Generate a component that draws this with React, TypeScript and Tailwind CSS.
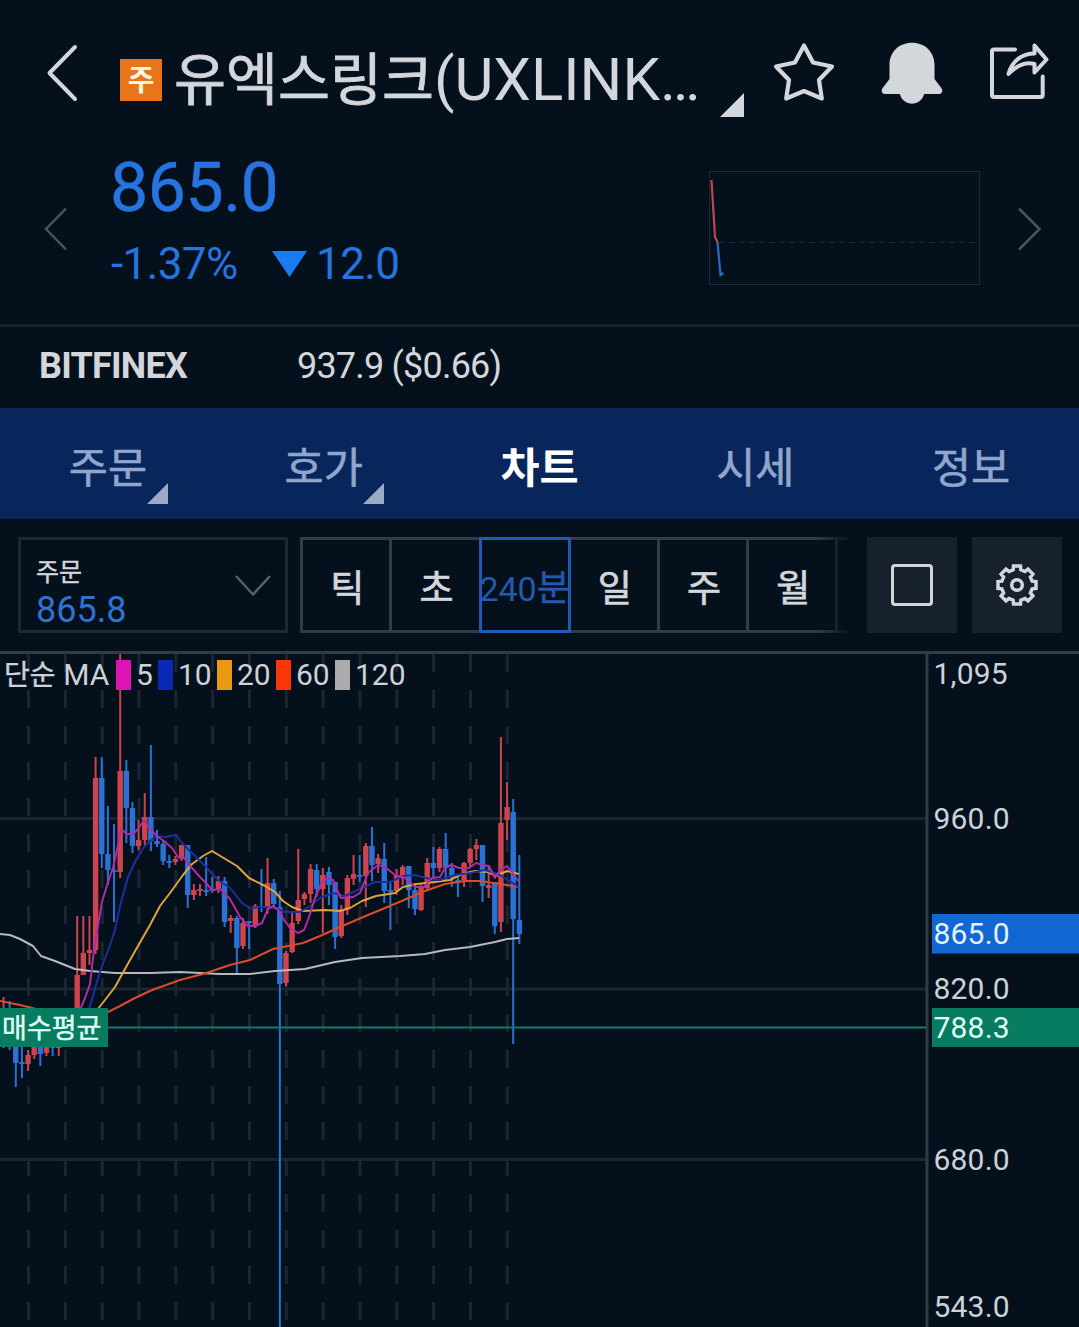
import React from 'react';

type Candle = [top: number, bottom: number, high: number, low: number, up: 0 | 1];

const TABS = [
  { id: 'order', label: '주문', more: true },
  { id: 'book', label: '호가', more: true },
  { id: 'chart', label: '차트', active: true },
  { id: 'quote', label: '시세' },
  { id: 'info', label: '정보' },
];

const PERIODS_LEFT = ['틱', '초'];
const PERIODS_RIGHT = ['일', '주', '월'];

const LEGEND = [
  { label: '5', color: 'bg-[#dc14b4]', width: 'w-[21px]' },
  { label: '10', color: 'bg-[#0a28b4]', width: 'w-[38px]' },
  { label: '20', color: 'bg-[#e89a12]', width: 'w-[38px]' },
  { label: '60', color: 'bg-[#fa3508]', width: 'w-[38px]' },
  { label: '120', color: 'bg-[#ababab]', width: 'w-[56px]' },
];

const TOP = 654;
const STEP = 6.141;
const FIRST_X = 3.5;

// body top, body bottom, high, low, up
const CANDLES: Candle[] = [
  [1010, 1030, 997, 1048, 1], [1015, 1040, 1001, 1050, 0], [1030, 1063, 1020, 1087, 0],
  [1062, 1064, 1040, 1078, 0], [1055, 1064, 1050, 1071, 1], [1040, 1055, 1035, 1059, 1],
  [1040, 1054, 1035, 1066, 0], [1042, 1053, 1035, 1056, 1], [1046, 1048, 1040, 1056, 0],
  [1040, 1048, 1035, 1056, 1], [1030, 1040, 1020, 1044, 1], [1010, 1030, 1010, 1040, 1],
  [975, 1012, 916, 1020, 1], [953, 975, 916, 975, 1], [950, 953, 916, 965, 1],
  [778, 950, 757, 954, 1], [778, 854, 757, 868, 0], [854, 870, 806, 885, 0],
  [870, 872, 824, 922, 0], [771, 872, 653, 878, 1], [771, 808, 760, 843, 0],
  [808, 846, 802, 853, 0], [840, 846, 820, 850, 1], [817, 840, 793, 845, 1],
  [817, 841, 745, 851, 0], [841, 844, 830, 847, 0], [844, 861, 840, 865, 0],
  [861, 863, 855, 868, 0], [859, 862, 856, 865, 1], [845, 859, 845, 861, 1],
  [845, 895, 845, 908, 0], [890, 895, 884, 900, 1], [889, 891, 884, 896, 1],
  [890, 892, 857, 896, 0], [889, 891, 877, 893, 0], [881, 890, 876, 893, 1],
  [881, 922, 877, 927, 0], [918, 921, 915, 933, 1], [918, 948, 916, 973, 0],
  [923, 946, 918, 949, 1], [921, 923, 921, 949, 0], [906, 926, 904, 928, 1],
  [906, 908, 869, 912, 0], [883, 907, 858, 914, 1], [883, 904, 879, 907, 0],
  [907, 984, 891, 1327, 0], [953, 983, 951, 986, 1], [923, 952, 912, 953, 1],
  [900, 921, 849, 924, 1], [894, 899, 892, 905, 1], [869, 894, 864, 903, 1],
  [870, 889, 864, 897, 0], [875, 889, 868, 933, 1], [872, 885, 867, 905, 0],
  [882, 937, 882, 949, 0], [909, 936, 905, 938, 1], [878, 909, 875, 915, 1],
  [874, 879, 855, 885, 1], [875, 877, 855, 882, 0], [846, 876, 843, 907, 1],
  [846, 865, 827, 881, 0], [858, 864, 854, 873, 1], [859, 891, 843, 903, 0],
  [890, 892, 881, 930, 0], [875, 891, 869, 895, 1], [867, 877, 865, 885, 1],
  [866, 890, 866, 908, 0], [890, 909, 883, 915, 0], [888, 910, 885, 911, 1],
  [863, 888, 858, 890, 1], [863, 868, 847, 877, 0], [849, 868, 847, 872, 1],
  [849, 868, 833, 880, 0], [868, 878, 863, 887, 0], [880, 882, 877, 897, 0],
  [863, 880, 862, 887, 1], [849, 863, 848, 868, 1], [845, 849, 839, 860, 1],
  [845, 886, 845, 902, 0], [885, 888, 865, 898, 1], [882, 926, 882, 934, 0],
  [823, 922, 737, 932, 1], [807, 820, 782, 840, 1], [812, 919, 799, 1044, 0],
  [920, 934, 855, 944, 0],
];

const AVERAGES = [
  {
    stroke: '#b9b9bb',
    points:
      '0,934 10,935 20,939 33,946 41,956 55,961 75,969 90,971 115,973 150,973 180,972 220,974 250,974 275,971 305,969 335,962 362,958 400,956 425,954 445,950 470,947 495,942 507,939 519,938',
  },
  {
    stroke: '#dd4a28',
    points:
      '0,1001 20,1005 40,1010 60,1014 85,1016 108,1012 120,1006 135,998 152,990 180,980 203,974 230,965 250,960 273,949 303,943 320,936 340,927 368,915 397,903 425,891 445,884 465,881 480,881 500,884 519,887',
  },
  {
    stroke: '#dfa23c',
    points:
      '88,1018 97,1010 105,1000 115,987 130,960 150,925 160,906 170,893 183,875 192,864 203,856 212,851 222,857 237,866 249,878 265,886 275,892 283,901 292,907 303,911 325,910 340,911 350,908 362,901 376,896 395,893 403,887 417,884 435,882 450,880 462,874 475,871 488,872 496,876 507,871 519,874',
  },
  {
    stroke: '#1d2f9f',
    points:
      '84,1022 91,1003 96,985 102,966 109,948 115,930 120,906 128,877 136,860 144,847 150,841 156,836 165,837 176,835 182,843 192,853 205,866 218,880 230,888 242,903 250,908 262,907 275,908 285,912 300,912 310,906 320,898 333,893 345,896 360,889 375,882 390,882 403,876 415,875 430,879 440,880 455,875 470,873 485,870 500,875 519,887',
  },
  {
    stroke: '#b32aa8',
    points:
      '72,1030 80,1010 85,998 90,984 94,950 98,925 102,902 108,882 113,868 118,845 121,829 127,834 133,834 138,829 144,820 150,829 158,837 164,841 172,848 178,857 184,858 192,868 200,877 207,884 212,890 220,889 230,899 240,917 248,926 255,926 262,923 268,909 273,906 279,911 284,920 290,928 298,933 304,930 308,920 315,898 322,882 328,878 333,880 338,892 341,898 353,897 360,893 368,873 378,865 385,867 395,875 405,878 415,887 424,887 432,878 440,877 445,868 451,865 459,868 469,868 476,863 483,865 489,866 495,878 500,870 507,866 512,872 519,882',
  },
];

const GRID_X = Array.from({ length: 14 }, (_, i) => 28.5 + i * 36.83);
const GRID_Y = [818.5, 989, 1159.5];

const PRICES = [
  { value: '1,095', y: 684 },
  { value: '960.0', y: 829 },
  { value: '820.0', y: 999 },
  { value: '680.0', y: 1170 },
  { value: '543.0', y: 1317 },
];

const gearPath = () => {
  const pts: string[] = [];
  for (let i = 0; i < 8; i++) {
    const mid = (i * Math.PI) / 4;
    [[-0.25, 15.6], [-0.18, 19.3], [0.18, 19.3], [0.25, 15.6]].forEach(([da, r]) => {
      pts.push(`${(22 + r * Math.sin(mid + da)).toFixed(2)},${(22 - r * Math.cos(mid + da)).toFixed(2)}`);
    });
  }
  return `M${pts.join('L')}Z`;
};

const Corner = ({ size }: { size: number }) => (
  <svg width={size} height={size} viewBox="0 0 10 10" fill="currentColor">
    <path d="M10 0V10H0Z" />
  </svg>
);

const Header = () => (
  <header className="flex h-[140px] text-[#d3d6da]">
    <svg className="mt-[43px] ml-[46px] shrink-0" width="34" height="60" fill="none" stroke="currentColor" strokeWidth="4" strokeLinecap="round" strokeLinejoin="round">
      <path d="M29 4 3.500 30 29 56" />
    </svg>
    <span className="mt-[59px] ml-[40px] flex h-[42px] w-[42px] shrink-0 items-center justify-center bg-[#e8751a] pt-[3px] text-[29px] leading-none font-bold text-[#fff4e6]">주</span>
    <h1 className="mt-[45px] ml-[12px] w-[532px] shrink-0 text-[60px] leading-[70px] whitespace-nowrap">
      <span className="text-[56.5px] [-webkit-text-stroke:0.8px]">유엑스링크</span>(UXLINK…
    </h1>
    <span className="mt-[93px] ml-[14px] w-[24px] shrink-0"><Corner size={24} /></span>
    <svg className="mt-[41px] ml-[28px] shrink-0" width="64" height="64" fill="none" stroke="currentColor" strokeWidth="4.200" strokeLinejoin="round">
      <path d="M32 4.500 41 21.500 60 25.500 47 39 49.800 57.500 32 50 14.200 57.500 17 39 4 25.500 23 21.500Z" />
    </svg>
    <svg className="mt-[41px] ml-[44px] shrink-0" width="64" height="64" fill="currentColor">
      <path d="M32 1.800C19 1.800 9.500 11 9.500 24V38L2.300 47.500C1 50 2 53 5 53H19.800A12.500 12.500 0 0 0 44.200 53H59C62 53 63 50 61.700 47.500L54.500 38V24C54.500 11 45 1.800 32 1.800Z" />
    </svg>
    <svg className="mt-[41px] ml-[43px] shrink-0" width="64" height="64" fill="none" stroke="currentColor" strokeWidth="4" strokeLinecap="round" strokeLinejoin="round">
      <path d="M28 8.500H7Q5 8.500 5 10.500V54Q5 56 7 56H53.700Q55.700 56 55.700 54V35.500" />
      <path d="M47.500 4.500 59.500 18.500 47.500 31.500V23C38 20.500 30 24 21.500 33C25 20 35 12.500 47.500 12.500Z" />
    </svg>
  </header>
);

const PriceRow = () => (
  <section className="flex h-[184px]">
    <svg className="mt-[67px] ml-[43px] shrink-0" width="25" height="44" fill="none" stroke="#4b525d" strokeWidth="2.500">
      <path d="M23 1.500 3 22 23 42.500" />
    </svg>
    <div className="ml-[42px] w-[599px] shrink-0 text-[#2674e0]">
      <p className="mt-[8px] text-[68px] leading-[80px] tracking-[-0.5px] [-webkit-text-stroke:0.4px]">865.0</p>
      <div className="mt-[10px] flex items-center text-[44px] leading-[52px] tracking-[-0.6px]">
        <span className="w-[162px] pl-px">-1.37%</span>
        <svg width="35" height="26" fill="#1a7bf5"><path d="M0 0H35L17.500 26Z" /></svg>
        <span className="ml-[9px]">12.0</span>
      </div>
    </div>
    <svg className="mt-[31px] shrink-0" width="271" height="114" fill="none">
      <rect x=".5" y=".5" width="270" height="113" stroke="#1f2934" />
      <path d="M10 71.500H266" stroke="#1f2934" strokeDasharray="6 4" />
      <path d="M2.500 9 6 66 8.500 71" stroke="#c8434e" strokeWidth="2.200" />
      <path d="M8.500 71 11.500 104 14.500 102" stroke="#2a6cc4" strokeWidth="2.200" />
    </svg>
    <svg className="mt-[67px] ml-[37px] shrink-0" width="25" height="44" fill="none" stroke="#4b525d" strokeWidth="2.500">
      <path d="M2 1.500 22.500 22 2 42.500" />
    </svg>
  </section>
);

const PeriodCell = ({ label }: { label: string }) => (
  <div className="flex h-full w-[89.300px] shrink-0 items-center justify-center border-y-[3px] border-r-[3px] border-[#333b47] pt-[9px] pl-[2px] text-[37px] leading-none [-webkit-text-stroke:0.7px]">{label}</div>
);

const Toolbar = () => (
  <section className="flex h-[132px] pt-[18px] pl-[18px] text-[#d3d6da]">
    <div className="flex h-[96px] w-[270px] shrink-0 justify-between border-[3px] border-[#1f2832]">
      <div className="pt-[17px] pl-[15px]">
        <p className="text-[25px] leading-[32px] [-webkit-text-stroke:0.4px]">주문</p>
        <p className="text-[36px] leading-[42px] text-[#2f72cf]">865.8</p>
      </div>
      <svg className="mt-[34px] mr-[13px]" width="38" height="24" fill="none" stroke="#58606b" strokeWidth="2.500">
        <path d="M2 2 19 20.500 36 2" />
      </svg>
    </div>
    <div className="relative ml-[12px] flex h-[96px] w-[552px] shrink-0 overflow-hidden">
      <div className="h-full w-[3px] shrink-0 bg-[#333b47]" />
      {PERIODS_LEFT.map((p) => <PeriodCell key={p} label={p} />)}
      <div className="z-10 -ml-[3px] flex h-full w-[92px] shrink-0 items-center justify-center overflow-hidden border-[3px] border-[#205ab4] pt-[7px] text-[34px] leading-none whitespace-nowrap text-[#2459ad]">
        240<span className="text-[36px] [-webkit-text-stroke:0.4px]">분</span>
      </div>
      {PERIODS_RIGHT.map((p) => <PeriodCell key={p} label={p} />)}
      <div className="h-full grow border-y-[3px] border-[#333b47]" />
      <div className="absolute top-0 right-0 h-full w-[36px] bg-linear-to-r from-transparent to-[#05101d]" />
    </div>
    <button className="ml-[15px] flex h-[96px] w-[90px] shrink-0 items-center justify-center bg-[#17212e]">
      <span className="h-[42px] w-[42px] rounded-[4px] border-[3px] border-[#d3d6da]" />
    </button>
    <button className="ml-[15px] flex h-[96px] w-[90px] shrink-0 items-center justify-center bg-[#17212e]">
      <svg width="44" height="44" fill="none" stroke="currentColor" strokeWidth="3.500">
        <path d={gearPath()} />
        <circle cx="22" cy="22" r="5.300" />
      </svg>
    </button>
  </section>
);

const Chart = () => (
  <section className="relative h-[676px] border-t-[3px] border-[#333b47]">
    <svg className="block" width="1079" height="673" viewBox="0 654 1079 673">
      {GRID_Y.map((y) => <path key={y} d={`M0 ${y}H926`} stroke="#1c2530" strokeWidth="3" />)}
      {GRID_X.map((x) => <path key={x} d={`M${x} ${TOP}V1327`} stroke="#1d2530" strokeWidth="3" strokeDasharray="18 18" />)}
      <path d="M927 654V1327" stroke="#333b47" strokeWidth="3" />
      {CANDLES.map(([top, bottom, high, low, up], i) => {
        const x = FIRST_X + i * STEP;
        const color = up ? '#cc444e' : '#2a72d4';
        return (
          <g key={i}>
            <path d={`M${x} ${high}V${low}`} stroke={color} strokeWidth="2" />
            <rect x={x - 2.7} y={top} width="5.4" height={bottom - top} fill={color} />
          </g>
        );
      })}
      {AVERAGES.map((a) => (
        <polyline key={a.stroke} points={a.points} fill="none" stroke={a.stroke} strokeWidth="2" strokeLinejoin="round" />
      ))}
      <path d="M0 1027.500H926" stroke="#127a6b" strokeWidth="2" />
      <rect x="932" y="914" width="147" height="39.500" fill="#1267d2" />
      <rect x="932" y="1008" width="147" height="39" fill="#087c60" />
      <g fontSize="30" letterSpacing=".2" fill="#cdd2d9">
        {PRICES.map((p) => <text key={p.value} x="933.500" y={p.y}>{p.value}</text>)}
        <text x="933.500" y="944" fill="#e2f2ff">865.0</text>
        <text x="933.500" y="1038" fill="#e0fff6">788.3</text>
      </g>
    </svg>
    {/* moving average legend */}
    <div className="absolute top-[4px] left-[4px] flex h-[34px] items-center text-[30px] leading-none whitespace-nowrap text-[#cdd2d9]">
      <span className="w-[112px] tracking-[0.1px]"><span className="text-[28px] [-webkit-text-stroke:0.4px]">단순</span> MA</span>
      {LEGEND.map((l) => (
        <React.Fragment key={l.label}>
          <span className={`h-[30px] w-[15px] ${l.color}`} />
          <span className={`ml-[5px] mr-[1px] ${l.width}`}>{l.label}</span>
        </React.Fragment>
      ))}
    </div>
    <div className="absolute top-[354px] left-0 flex h-[39px] w-[108px] items-center bg-[#087c60] pt-[3px] pl-[2px] text-[27px] leading-none whitespace-nowrap text-[#e0fff6] [-webkit-text-stroke:0.4px]">매수평균</div>
  </section>
);

const App: React.FC = () => (
  <div className="h-[1327px] w-[1079px] overflow-hidden bg-[#05101d] font-[Roboto,'Noto_Sans_CJK_KR',sans-serif]">
    <Header />
    <PriceRow />
    <section className="flex h-[84px] items-center border-t-[3px] border-[#18212c] pb-[4px] pl-[39px] text-[36px] text-[#d3d6da]">
      <strong className="w-[258px] font-bold tracking-[-0.75px]">BITFINEX</strong>
      <span className="tracking-[-0.8px]">937.9 ($0.66)</span>
    </section>
    <nav className="grid h-[111px] grid-cols-5 bg-[#08265b] text-[42.500px] text-[#92a5cc]">
      {TABS.map((tab) => (
        <div key={tab.id} className={`relative flex items-center justify-center pt-[10px] ${tab.active ? 'font-bold text-white' : '[-webkit-text-stroke:0.6px]'}`}>
          {tab.label}
          {tab.more && <span className="absolute top-[75px] left-[147px] text-[#9babc6]"><Corner size={21} /></span>}
        </div>
      ))}
    </nav>
    <Toolbar />
    <Chart />
  </div>
);

export default App;
